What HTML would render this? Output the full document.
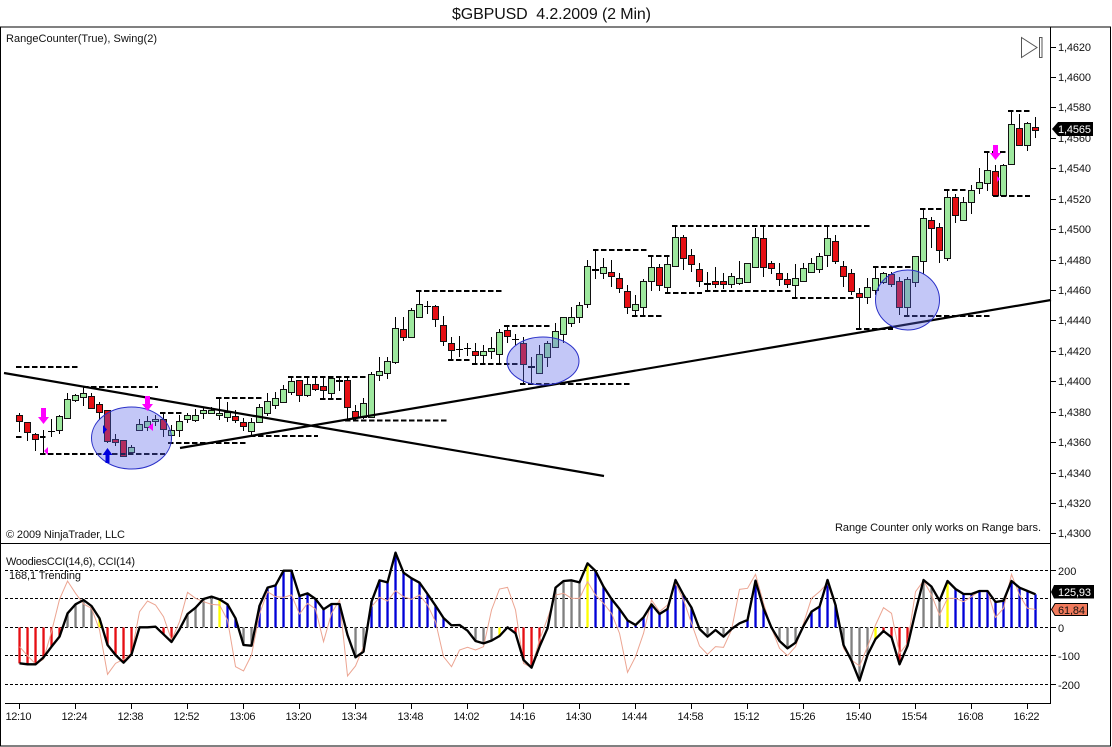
<!DOCTYPE html>
<html>
<head>
<meta charset="utf-8">
<title>$GBPUSD 4.2.2009 (2 Min)</title>
<style>
html,body{margin:0;padding:0;background:#fff;width:1112px;height:747px;overflow:hidden}
svg{display:block}
text{font-family:"Liberation Sans",sans-serif;font-size:11px;fill:#111}
</style>
</head>
<body>
<svg width="1112" height="747" viewBox="0 0 1112 747" xmlns="http://www.w3.org/2000/svg">
<rect width="1112" height="747" fill="#fff"/>
<text x="551.5" y="19" text-anchor="middle" style="font-size:16px;white-space:pre" textLength="199" xml:space="preserve">$GBPUSD  4.2.2009 (2 Min)</text>

<!-- frame -->
<path d="M.5 27H1110.5V746H.5Z" fill="none" stroke="#000"/>
<path d="M1050.5 27V703.5H5M0 543.5H1050.5" fill="none" stroke="#000"/>

<!-- price ticks -->
<path d="M1051 47.5h5M1051 77.5h5M1051 107.5h5M1051 138.5h5M1051 168.5h5M1051 199.5h5M1051 229.5h5M1051 260.5h5M1051 290.5h5M1051 320.5h5M1051 351.5h5M1051 381.5h5M1051 412.5h5M1051 442.5h5M1051 473.5h5M1051 503.5h5M1051 533.5h5M1051 570.5h5M1051 627.5h5M1051 655.5h5M1051 684.5h5" stroke="#000" fill="none"/>
<g>
<text x="1058" y="51" textLength="33">1,4620</text>
<text x="1058" y="81" textLength="33">1,4600</text>
<text x="1058" y="111" textLength="33">1,4580</text>
<text x="1058" y="142" textLength="33">1,4560</text>
<text x="1058" y="172" textLength="33">1,4540</text>
<text x="1058" y="203" textLength="33">1,4520</text>
<text x="1058" y="233" textLength="33">1,4500</text>
<text x="1058" y="264" textLength="33">1,4480</text>
<text x="1058" y="294" textLength="33">1,4460</text>
<text x="1058" y="324" textLength="33">1,4440</text>
<text x="1058" y="355" textLength="33">1,4420</text>
<text x="1058" y="385" textLength="33">1,4400</text>
<text x="1058" y="416" textLength="33">1,4380</text>
<text x="1058" y="446" textLength="33">1,4360</text>
<text x="1058" y="477" textLength="33">1,4340</text>
<text x="1058" y="507" textLength="33">1,4320</text>
<text x="1058" y="537" textLength="33">1,4300</text>
<text x="1058" y="575">200</text>
<text x="1058" y="632">0</text>
<text x="1058" y="660">-100</text>
<text x="1058" y="689">-200</text>
</g>

<!-- time ticks and labels -->
<path d="M19.5 703v6M75.5 703v6M131.5 703v6M187.5 703v6M243.5 703v6M299.5 703v6M355.5 703v6M411.5 703v6M467.5 703v6M523.5 703v6M579.5 703v6M635.5 703v6M691.5 703v6M747.5 703v6M803.5 703v6M859.5 703v6M915.5 703v6M971.5 703v6M1027.5 703v6" stroke="#000" fill="none"/>
<g text-anchor="middle">
<text x="18.5" y="720" textLength="26">12:10</text>
<text x="74.5" y="720" textLength="26">12:24</text>
<text x="130.5" y="720" textLength="26">12:38</text>
<text x="186.5" y="720" textLength="26">12:52</text>
<text x="242.5" y="720" textLength="26">13:06</text>
<text x="298.5" y="720" textLength="26">13:20</text>
<text x="354.5" y="720" textLength="26">13:34</text>
<text x="410.5" y="720" textLength="26">13:48</text>
<text x="466.5" y="720" textLength="26">14:02</text>
<text x="522.5" y="720" textLength="26">14:16</text>
<text x="578.5" y="720" textLength="26">14:30</text>
<text x="634.5" y="720" textLength="26">14:44</text>
<text x="690.5" y="720" textLength="26">14:58</text>
<text x="746.5" y="720" textLength="26">15:12</text>
<text x="802.5" y="720" textLength="26">15:26</text>
<text x="858.5" y="720" textLength="26">15:40</text>
<text x="914.5" y="720" textLength="26">15:54</text>
<text x="970.5" y="720" textLength="26">16:08</text>
<text x="1026.5" y="720" textLength="26">16:22</text>
</g>

<!-- panel texts -->
<text x="6" y="42" textLength="151">RangeCounter(True), Swing(2)</text>
<text x="6" y="538" textLength="119">© 2009 NinjaTrader, LLC</text>
<text x="835" y="531" textLength="206">Range Counter only works on Range bars.</text>
<text x="6" y="565" textLength="129">WoodiesCCI(14,6), CCI(14)</text>
<text x="9" y="579" textLength="72">168,1 Trending</text>

<!-- play icon -->
<path d="M1021.5 37.5V57.5L1037 47.5ZM1039.5 37.5h2.5V57.5h-2.5Z" fill="#fff" stroke="#555"/>

<!-- wicks -->
<path fill="none" stroke="#000" d="M19.5 413V432M27.5 422V441M35.5 433V451M43.5 430V453M51.5 419V437M59.5 415V434M67.5 393V418M75.5 394V402M83.5 387V406M91.5 393V408M99.5 402V420M107.5 410V443M115.5 434V446M123.5 440V456M131.5 445V452M139.5 419V431M147.5 416V431M155.5 415V426M163.5 413V437M171.5 425V440M179.5 415V437M187.5 413V423M195.5 409V422M203.5 407V419M211.5 407V413M219.5 398V420M227.5 402V422M235.5 410V423M243.5 418V431M251.5 418V436M259.5 404V422M267.5 393V416M275.5 392V409M283.5 385V402M291.5 377V395M299.5 380V402M307.5 377V397M315.5 377V391M323.5 377V398M331.5 377V398M339.5 377V391M347.5 377V420M355.5 405V421M363.5 398V419M371.5 372V417M379.5 357V381M387.5 357V379M395.5 317V364M403.5 317V341M411.5 308V337M419.5 291V317M427.5 301V314M435.5 305V327M443.5 316V346M451.5 337V360M459.5 336V357M467.5 343V356M475.5 343V364M483.5 345V364M491.5 337V359M499.5 329V364M507.5 326V343M515.5 334V345M523.5 337V383M531.5 357V383M539.5 345V373M547.5 341V367M555.5 323V347M563.5 317V343M571.5 307V327M579.5 302V323M587.5 260V308M595.5 250V279M603.5 258V279M611.5 260V287M619.5 273V293M627.5 285V314M635.5 295V316M643.5 279V316M651.5 256V291M659.5 264V291M667.5 255V293M675.5 226V266M683.5 235V270M691.5 249V272M699.5 263V287M707.5 272V291M715.5 267V288M723.5 273V289M731.5 273V288M739.5 261V285M747.5 263V282M755.5 228V267M763.5 225V277M771.5 261V274M779.5 263V286M787.5 273V288M795.5 264V297M803.5 263V281M811.5 258V273M819.5 253V273M827.5 225V267M835.5 235V264M843.5 261V287M851.5 269V295M859.5 288V329M867.5 278V304M875.5 267V295M883.5 272V284M891.5 272V287M899.5 277V315M907.5 277V315M915.5 256V287M923.5 209V274M931.5 217V248M939.5 223V263M947.5 189V261M955.5 194V223M963.5 197V220M971.5 185V214M979.5 168V194M987.5 152V191M995.5 165V196M1003.5 164V196M1011.5 111V164M1019.5 114V145M1027.5 122V151M1035.5 117V138"/>
<!-- doji -->
<path fill="none" stroke="#000" d="M48 431.5h7M424 306.5h7M456 349.5h7M464 348.5h7M512 339.5h7"/>
<path fill="none" stroke="#000" stroke-width="2" d="M336 381h7M528 367h7M592 270h7M704 284h7"/>
<!-- green bodies -->
<path fill="#9ee89e" stroke="#111" d="M56.5 416.5h6V430.5h-6zM64.5 399.5h6V418.5h-6zM72.5 395.5h6V400.5h-6zM80.5 393.5h6V397.5h-6zM128.5 447.5h6V452.5h-6zM136.5 424.5h6V430.5h-6zM144.5 421.5h6V427.5h-6zM152.5 419.5h6V421.5h-6zM168.5 430.5h6V435.5h-6zM176.5 421.5h6V430.5h-6zM184.5 415.5h6V419.5h-6zM192.5 415.5h6V420.5h-6zM200.5 410.5h6V413.5h-6zM208.5 410.5h6V413.5h-6zM216.5 413.5h6V415.5h-6zM224.5 412.5h6V417.5h-6zM248.5 422.5h6V431.5h-6zM256.5 407.5h6V422.5h-6zM264.5 401.5h6V413.5h-6zM272.5 398.5h6V405.5h-6zM280.5 389.5h6V402.5h-6zM288.5 381.5h6V392.5h-6zM304.5 384.5h6V395.5h-6zM328.5 378.5h6V393.5h-6zM360.5 403.5h6V417.5h-6zM368.5 374.5h6V417.5h-6zM376.5 371.5h6V375.5h-6zM384.5 361.5h6V373.5h-6zM392.5 328.5h6V362.5h-6zM408.5 310.5h6V337.5h-6zM416.5 304.5h6V317.5h-6zM480.5 351.5h6V355.5h-6zM488.5 348.5h6V351.5h-6zM496.5 332.5h6V354.5h-6zM536.5 354.5h6V373.5h-6zM544.5 343.5h6V357.5h-6zM552.5 331.5h6V347.5h-6zM560.5 317.5h6V334.5h-6zM568.5 317.5h6V323.5h-6zM576.5 305.5h6V317.5h-6zM584.5 266.5h6V304.5h-6zM600.5 267.5h6V273.5h-6zM632.5 304.5h6V310.5h-6zM640.5 281.5h6V307.5h-6zM648.5 267.5h6V281.5h-6zM664.5 264.5h6V287.5h-6zM672.5 237.5h6V266.5h-6zM728.5 276.5h6V284.5h-6zM736.5 278.5h6V283.5h-6zM744.5 263.5h6V282.5h-6zM752.5 237.5h6V267.5h-6zM792.5 278.5h6V285.5h-6zM800.5 268.5h6V281.5h-6zM808.5 263.5h6V272.5h-6zM816.5 256.5h6V269.5h-6zM824.5 238.5h6V255.5h-6zM864.5 287.5h6V297.5h-6zM872.5 278.5h6V290.5h-6zM880.5 273.5h6V282.5h-6zM904.5 279.5h6V307.5h-6zM912.5 256.5h6V282.5h-6zM920.5 218.5h6V261.5h-6zM944.5 197.5h6V258.5h-6zM960.5 202.5h6V220.5h-6zM968.5 190.5h6V202.5h-6zM976.5 182.5h6V188.5h-6zM984.5 170.5h6V183.5h-6zM1000.5 165.5h6V195.5h-6zM1008.5 124.5h6V164.5h-6zM1024.5 123.5h6V145.5h-6z"/>
<!-- red bodies -->
<path fill="#e60f14" stroke="#111" d="M16.5 415.5h6V421.5h-6zM24.5 422.5h6V432.5h-6zM32.5 434.5h6V439.5h-6zM88.5 396.5h6V408.5h-6zM96.5 404.5h6V412.5h-6zM104.5 410.5h6V441.5h-6zM112.5 439.5h6V442.5h-6zM120.5 440.5h6V456.5h-6zM160.5 419.5h6V429.5h-6zM232.5 416.5h6V420.5h-6zM240.5 422.5h6V426.5h-6zM296.5 380.5h6V395.5h-6zM312.5 384.5h6V389.5h-6zM320.5 386.5h6V390.5h-6zM344.5 380.5h6V407.5h-6zM352.5 411.5h6V417.5h-6zM400.5 329.5h6V337.5h-6zM432.5 306.5h6V319.5h-6zM440.5 325.5h6V341.5h-6zM448.5 343.5h6V350.5h-6zM472.5 351.5h6V355.5h-6zM504.5 330.5h6V336.5h-6zM520.5 343.5h6V364.5h-6zM608.5 272.5h6V276.5h-6zM616.5 278.5h6V288.5h-6zM624.5 291.5h6V307.5h-6zM656.5 267.5h6V285.5h-6zM680.5 237.5h6V258.5h-6zM688.5 255.5h6V264.5h-6zM696.5 269.5h6V281.5h-6zM712.5 281.5h6V284.5h-6zM720.5 281.5h6V284.5h-6zM760.5 238.5h6V267.5h-6zM768.5 263.5h6V268.5h-6zM776.5 273.5h6V279.5h-6zM784.5 279.5h6V284.5h-6zM832.5 241.5h6V261.5h-6zM840.5 266.5h6V276.5h-6zM848.5 273.5h6V291.5h-6zM856.5 293.5h6V297.5h-6zM888.5 274.5h6V284.5h-6zM896.5 281.5h6V307.5h-6zM928.5 220.5h6V228.5h-6zM936.5 227.5h6V250.5h-6zM952.5 197.5h6V215.5h-6zM992.5 171.5h6V195.5h-6zM1016.5 128.5h6V145.5h-6zM1032.5 127.5h6V130.5h-6z"/>

<!-- swing dashes -->
<path fill="none" stroke="#000" stroke-width="2" stroke-dasharray="5.5 2.5" d="M16 367H78M16 437H23M40 437H47M40 454H165M83 387H158M160 413H182M168 443H246M216 398H262M250 436H318M288 377H368M320 399H342M345 420.500H447M416 291H502M504 326H550M448 360H470M472 364H518M520 384H630M593 250H647M648 256H670M665 293H702M705 291H792M632 316H662M672 226H870M792 298H855M856 329H893M873 267H912M904 316H990M920 209H942M944 190H967M993 196H1030M984 152H1007M1008 111H1030"/>

<!-- trend lines -->
<path fill="none" stroke="#000" stroke-width="2.200" d="M4 373L604 476M180 448L1051 300"/>

<!-- ellipses -->
<g fill="#5a64ea" fill-opacity=".36" stroke="#2a30c8" stroke-width="1">
<ellipse cx="131.500" cy="438" rx="40" ry="31"/>
<ellipse cx="543" cy="361" rx="36" ry="24"/>
<ellipse cx="907.500" cy="300" rx="32" ry="30"/>
</g>

<!-- arrows -->
<path fill="#f0f" d="M41 408h5v9h3l-5.500 7-5.500-7h3zM145 396h5v8h3l-5.500 7-5.500-7h3zM993 145h5v8h3l-5.500 7-5.500-7h3zM48 447v8l-4-4zM153 423v8l-5-4zM997 176l3 3-3 3z"/>
<path fill="#00d" d="M105.500 463v-8h-3l5-7 5 7h-3v8zM103 425l4 4.500-4 4.500z"/>

<!-- CCI dashed levels -->
<path fill="none" stroke="#000" stroke-dasharray="3 2" d="M5 570.500H1050M5 598.500H1050M5 627.500H1050M5 655.500H1050M5 684.500H1050"/>

<!-- CCI histogram & lines (3x coordinates) -->
<g transform="translate(0.2 540) scale(.33333)" fill="none">
<path stroke="#e60f14" stroke-width="7" d="M58 262V370M82 262V373M106 262V373M130 262V352M154 262V320M178 262V290M322 262V315M346 262V345M370 262V368M394 262V343M490 262V283M514 262V306M1546 262V280M1570 262V360M1594 262V383M1618 262V320M2650 262V273M2674 262V292M2698 262V373M2722 262V318"/>
<path stroke="#808080" stroke-width="7" d="M202 262V220M226 262V193M250 262V180M274 262V198M562 262V222M586 262V203M610 262V177M634 262V170M730 262V315M754 262V317M1066 262V352M1090 262V335M1426 262V303M1450 262V310M1474 262V302M1666 262V143M1690 262V123M1714 262V121M1738 262V127M2122 262V290M2170 262V290M2338 262V303M2362 262V325M2386 262V308M2530 262V315M2554 262V362M2578 262V422M2602 262V345M2770 262V120M2794 262V140M2818 262V182"/>
<path stroke="#ffff00" stroke-width="7" d="M298 262V235M658 262V178M1498 262V288M1762 262V70M2626 262V297M2842 262V123"/>
<path stroke="#0000d8" stroke-width="7" d="M682 262V193M706 262V235M778 262V197M802 262V143M826 262V136M850 262V92M874 262V92M898 262V168M922 262V160M946 262V177M970 262V208M994 262V192M1018 262V192M1114 262V185M1138 262V121M1162 262V127M1186 262V38M1210 262V98M1234 262V115M1258 262V128M1282 262V162M1306 262V197M1330 262V234M1786 262V93M1810 262V140M1834 262V177M1858 262V207M1882 262V241M1906 262V255M1930 262V232M1954 262V193M1978 262V222M2002 262V207M2026 262V120M2050 262V165M2074 262V203M2242 262V240M2266 262V122M2290 262V205M2434 262V215M2458 262V200M2482 262V120M2506 262V195M2866 262V147M2890 262V162M2914 262V162M2938 262V153M2962 262V153M2986 262V186M3010 262V182M3034 262V123M3058 262V143M3082 262V153M3106 262V163"/>
<polyline stroke="#eca592" stroke-width="3" points="58,320 82,347 106,372 130,358 154,275 178,178 202,123 226,160 250,192 274,205 298,270 322,403 346,370 370,358 394,340 418,215 442,183 466,195 490,230 514,300 538,245 562,157 586,175 610,185 634,193 658,195 682,240 706,380 730,393 754,345 778,222 802,155 826,170 850,172 874,165 898,222 922,190 946,207 970,305 994,220 1018,180 1042,408 1066,378 1090,320 1114,200 1138,172 1162,183 1186,152 1210,170 1234,178 1258,165 1282,195 1306,245 1330,350 1354,380 1378,330 1402,322 1426,330 1450,320 1474,210 1498,147 1522,142 1546,210 1570,370 1594,383 1618,300 1642,235 1666,165 1690,160 1714,175 1738,175 1762,125 1786,165 1810,190 1834,220 1858,280 1882,397 1906,350 1930,280 1954,180 1978,215 2002,195 2026,130 2050,180 2074,250 2098,318 2122,343 2146,320 2170,322 2194,270 2218,148 2242,145 2266,103 2290,190 2314,265 2338,325 2362,347 2386,320 2410,250 2434,175 2458,155 2482,130 2506,200 2530,325 2554,360 2578,378 2602,320 2626,255 2650,203 2674,220 2698,340 2722,310 2746,155 2770,122 2794,165 2818,225 2842,175 2866,175 2890,185 2914,170 2938,153 2962,153 2986,232 3010,205 3034,103 3058,165 3082,205 3106,208"/>
<polyline stroke="#000" stroke-width="7" stroke-linejoin="round" points="58,370 82,373 106,373 130,352 154,320 178,290 202,220 226,193 250,180 274,198 298,235 322,315 346,345 370,368 394,343 418,262 442,262 466,260 490,283 514,306 538,268 562,222 586,203 610,177 634,170 658,178 682,193 706,235 730,315 754,317 778,197 802,143 826,136 850,92 874,92 898,168 922,160 946,177 970,208 994,192 1018,192 1042,285 1066,352 1090,335 1114,185 1138,121 1162,127 1186,38 1210,98 1234,115 1258,128 1282,162 1306,197 1330,234 1354,256 1378,255 1402,272 1426,303 1450,310 1474,302 1498,288 1522,262 1546,280 1570,360 1594,383 1618,320 1642,265 1666,143 1690,123 1714,121 1738,127 1762,70 1786,93 1810,140 1834,177 1858,207 1882,241 1906,255 1930,232 1954,193 1978,222 2002,207 2026,120 2050,165 2074,203 2098,267 2122,290 2146,270 2170,290 2194,267 2218,250 2242,240 2266,122 2290,205 2314,263 2338,303 2362,325 2386,308 2410,258 2434,215 2458,200 2482,120 2506,195 2530,315 2554,362 2578,422 2602,345 2626,297 2650,273 2674,292 2698,373 2722,318 2746,215 2770,120 2794,140 2818,182 2842,123 2866,147 2890,162 2914,162 2938,153 2962,153 2986,186 3010,182 3034,123 3058,143 3082,153 3106,163"/>
</g>

<!-- value tags -->
<path d="M1052 129L1058 122H1093V136H1058Z" fill="#000"/>
<text x="1058" y="133" textLength="33" style="fill:#fff">1,4565</text>
<path d="M1051 592L1054 585H1094V598.500H1054Z" fill="#000"/>
<text x="1058" y="596" textLength="33" style="fill:#fff">125,93</text>
<path d="M1051.500 609.500L1055 603.500H1087.500V615.500H1055Z" fill="#f07a5c" stroke="#000"/>
<text x="1058" y="614" textLength="27">61,84</text>
</svg>
</body>
</html>
